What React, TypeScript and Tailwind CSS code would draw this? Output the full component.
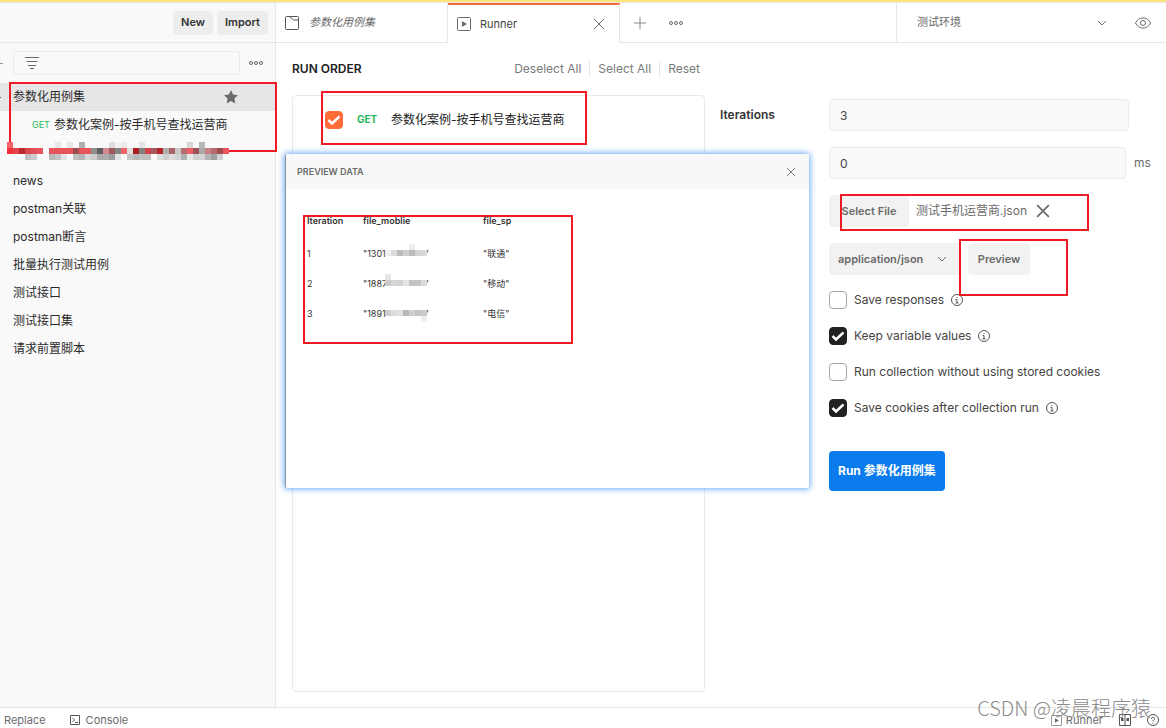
import { useState } from "react";
import type { ReactNode } from "react";
import clsx from "clsx";

const COLLECTIONS = [
  "news",
  "postman关联",
  "postman断言",
  "批量执行测试用例",
  "测试接口",
  "测试接口集",
  "请求前置脚本",
];

type Cell = [col: number, row: number, color: string];

const SIDEBAR_CELLS: Cell[] = [
  [0, 0, "#f5636b"], [8, 0, "#e6e6e6"], [10, 0, "#e6e6e6"], [12, 0, "#b0b0b0"],
  [17, 0, "#dedede"], [18, 0, "#f2f2f2"], [19, 0, "#eaeaea"], [22, 0, "#e4e4e4"],
  [30, 0, "#d6d6d6"], [32, 0, "#b8b8b8"],
  [0, 1, "#ef3239"], [1, 1, "#e5444c"], [2, 1, "#b92a30"], [3, 1, "#d9474f"],
  [4, 1, "#e0525a"], [5, 1, "#e9555e"], [7, 1, "#e9545c"], [8, 1, "#e9545c"],
  [9, 1, "#e9545c"], [10, 1, "#e9545c"], [11, 1, "#9b4d51"], [12, 1, "#e9545c"],
  [13, 1, "#e9545c"], [14, 1, "#8f8f8f"], [15, 1, "#5f5f5f"], [16, 1, "#d8898e"],
  [17, 1, "#9e5a5d"], [18, 1, "#858585"], [19, 1, "#f5636b"], [20, 1, "#dddddd"],
  [21, 1, "#a91f24"], [22, 1, "#808080"], [23, 1, "#d4434a"], [24, 1, "#a65a5e"],
  [25, 1, "#b6262c"], [26, 1, "#b0b0b0"], [27, 1, "#a9646a"], [28, 1, "#c8c8c8"],
  [29, 1, "#b56e72"], [30, 1, "#ee5e67"], [31, 1, "#9b5459"], [32, 1, "#aaaaaa"],
  [33, 1, "#c88084"], [34, 1, "#b86b6f"], [35, 1, "#a04a50"], [36, 1, "#f0545c"],
  [3, 2, "#c0c0c0"], [4, 2, "#cccccc"], [7, 2, "#b8b8b8"], [8, 2, "#c4c4c4"],
  [9, 2, "#e4e4e4"], [11, 2, "#c0c0c0"], [12, 2, "#b4b4b4"], [13, 2, "#d6d6d6"],
  [14, 2, "#cccccc"], [15, 2, "#a8a8a8"], [16, 2, "#aaaaaa"], [17, 2, "#9c9c9c"],
  [18, 2, "#e4e4e4"], [20, 2, "#c4c4c4"], [21, 2, "#b8b8b8"], [22, 2, "#c0c0c0"],
  [23, 2, "#c0c0c0"], [25, 2, "#dddddd"], [26, 2, "#d0d0d0"], [27, 2, "#dcdcdc"],
  [28, 2, "#d4d4d4"], [29, 2, "#b0b0b0"], [30, 2, "#e8e8e8"], [31, 2, "#d0d0d0"],
  [32, 2, "#d4d4d4"], [33, 2, "#b4b4b4"], [34, 2, "#a0a0a0"], [35, 2, "#d0d0d0"],
];

const PREVIEW_ROWS: { id: number; prefix: string; sp: string; cells: Cell[] }[] = [
  {
    id: 1,
    prefix: '"1301',
    sp: '"联通"',
    cells: [
      [4, 0, "#ededed"], [0, 1, "#efefef"], [1, 1, "#dcdcdc"], [2, 1, "#bdbdbd"],
      [3, 1, "#cfcfcf"], [4, 1, "#bcbcbc"], [5, 1, "#d4d4d4"], [6, 1, "#d9d9d9"],
    ],
  },
  {
    id: 2,
    prefix: '"1887',
    sp: '"移动"',
    cells: [
      [0, 0, "#e4e4e4"], [0, 1, "#cacaca"], [1, 1, "#d6d6d6"], [2, 1, "#d2d2d2"],
      [3, 1, "#e3e3e3"], [4, 1, "#c2c2c2"], [5, 1, "#c3c3c3"], [6, 1, "#dadada"],
    ],
  },
  {
    id: 3,
    prefix: '"1891',
    sp: '"电信"',
    cells: [
      [0, 1, "#cccccc"], [1, 1, "#dddddd"], [2, 1, "#e2e2e2"], [3, 1, "#b8b8b8"],
      [4, 1, "#cfcfcf"], [5, 1, "#c4c4c4"], [6, 1, "#cacaca"], [6, 2, "#efefef"],
    ],
  },
];

function Mosaic({ cells, cols, className }: { cells: Cell[]; cols: number; className?: string }) {
  return (
    <svg
      width={cols * 6}
      height={18}
      viewBox={`0 0 ${cols * 6} 18`}
      shapeRendering="crispEdges"
      className={className}
      aria-hidden="true"
    >
      {cells.map(([col, row, color]) => (
        <rect key={`${col}-${row}`} x={col * 6} y={row * 6} width={6} height={6} fill={color} />
      ))}
    </svg>
  );
}

function Highlight({ className }: { className: string }) {
  return <div className={clsx("pointer-events-none absolute border-2 border-[#ed1c24]", className)} />;
}

function DotsIcon() {
  return (
    <svg width="16" height="8" viewBox="0 0 16 8" fill="none" stroke="#6b6b6b">
      <circle cx="3" cy="4" r="1.5" />
      <circle cx="8" cy="4" r="1.5" />
      <circle cx="13" cy="4" r="1.5" />
    </svg>
  );
}

function CloseIcon({ size, width = 1 }: { size: number; width?: number }) {
  return (
    <svg width={size} height={size} viewBox="0 0 12 12" fill="none" stroke="#6b6b6b" strokeWidth={width}>
      <path d="M1 1l10 10M11 1L1 11" />
    </svg>
  );
}

function ChevronIcon() {
  return (
    <svg width="10" height="6" viewBox="0 0 10 6" fill="none" stroke="#6b6b6b">
      <path d="M1 1l4 4 4-4" />
    </svg>
  );
}

function InfoIcon() {
  return (
    <svg width="12" height="12" viewBox="0 0 12 12" fill="none" stroke="#555">
      <circle cx="6" cy="6" r="5.5" />
      <path d="M4.5 5.5H6V9M4.5 9h3M5.5 3.5h1" />
    </svg>
  );
}

function PlayBoxIcon({ size }: { size: number }) {
  return (
    <svg width={size} height={size} viewBox="0 0 14 14" fill="none" stroke="#6b6b6b">
      <rect x="0.5" y="0.5" width="13" height="13" rx="1" />
      <path d="M5 4l5 3-5 3z" fill="#6b6b6b" stroke="none" />
    </svg>
  );
}

function CheckBox({
  id,
  defaultChecked,
  orange,
}: {
  id: string;
  defaultChecked?: boolean;
  orange?: boolean;
}) {
  return (
    <span className="relative flex size-[18px] shrink-0">
      <input
        id={id}
        type="checkbox"
        defaultChecked={defaultChecked}
        className={clsx(
          "peer size-[18px] appearance-none rounded border border-[#a6a6a6] bg-white",
          orange
            ? "checked:border-[#ff6c37] checked:bg-[#ff6c37]"
            : "checked:border-[#212121] checked:bg-[#212121]",
        )}
      />
      <svg
        viewBox="0 0 18 18"
        fill="none"
        stroke="white"
        strokeWidth="2.5"
        className="pointer-events-none absolute inset-0 hidden peer-checked:block"
      >
        <path d="M3.5 9l3.5 3.5 7.500-7" />
      </svg>
    </span>
  );
}

function Option({
  id,
  checked,
  info,
  children,
}: {
  id: string;
  checked?: boolean;
  info?: boolean;
  children: ReactNode;
}) {
  return (
    <div className="flex h-[18px] items-center gap-[7px]">
      <CheckBox id={id} defaultChecked={checked} />
      <label htmlFor={id} className="leading-5 whitespace-nowrap text-[#444]">
        {children}
      </label>
      {info && <InfoIcon />}
    </div>
  );
}

function Sidebar() {
  return (
    <aside className="flex w-[276px] shrink-0 flex-col border-r border-[#e6e6e6] bg-[#f9f9f9]">
      <div className="flex h-10 items-center justify-end gap-1 border-b border-[#e6e6e6] pr-[7px] text-[11px] font-semibold text-[#333]">
        <button type="button" className="h-6 rounded bg-[#ededed] px-2">
          New
        </button>
        <button type="button" className="h-6 rounded bg-[#ededed] px-2">
          Import
        </button>
      </div>

      <div className="flex items-center py-2 pr-[11px]">
        <span className="mr-[10px] h-px w-[3px] bg-[#999]" />
        <div className="relative flex-1">
          <input
            aria-label="Filter collections"
            className="block h-6 w-full rounded-xs border border-[#ececec] bg-transparent pl-8 text-xs outline-none"
          />
          <svg
            width="14"
            height="12"
            viewBox="0 0 14 12"
            stroke="#6b6b6b"
            className="pointer-events-none absolute top-1.5 left-3"
          >
            <path d="M0 .5h14M1.500 4.500h11M3 8.500h8M5 11.500h4" />
          </svg>
        </div>
        <button type="button" aria-label="More" className="ml-2">
          <DotsIcon />
        </button>
      </div>

      <nav className="text-[#2b2b2b]">
        <div className="relative">
          <a href="#collection" className="flex h-7 items-center bg-[#e6e6e6] pr-[37px]">
            <span className="mr-3 size-px bg-[#555]" />
            <span className="flex-1">参数化用例集</span>
            <svg width="14" height="14" viewBox="0 0 14 14" fill="#6b6b6b">
              <path d="M7 0l2.100 4.600 4.900.6-3.600 3.400.9 5L7 11.100 2.700 13.600l.9-5L0 5.200l4.900-.6z" />
            </svg>
          </a>
          <a href="#request" className="flex h-7 items-center gap-1 pl-8">
            <span className="text-[9px] text-[#26b95a]">GET</span>
            <span>参数化案例-按手机号查找运营商</span>
          </a>
          <div className="h-7" />
          <Highlight className="-top-px -right-[2px] left-[9px] h-[70px]" />
          <Mosaic
            cells={SIDEBAR_CELLS}
            cols={37}
            className="absolute top-[59px] left-[7px] bg-[#f9f9f9]"
          />
        </div>
        {COLLECTIONS.map((name) => (
          <a key={name} href="#collection" className="flex h-7 items-center pl-[13px]">
            {name}
          </a>
        ))}
      </nav>
    </aside>
  );
}

function TabBar() {
  return (
    <header className="flex h-10 shrink-0 text-[11px] text-[#6b6b6b]">
      <button
        type="button"
        className="flex w-[172px] items-center gap-2.5 border-r border-b border-[#e6e6e6] pl-[9px] italic"
      >
        <svg width="14" height="14" viewBox="0 0 14 14" fill="none" stroke="#555">
          <path d="M4.500 .5H1.500a1 1 0 0 0-1 1v11a1 1 0 0 0 1 1h11a1 1 0 0 0 1-1v-11a1 1 0 0 0-1-1H4.500l4 3.500h5" />
        </svg>
        参数化用例集
      </button>
      <div className="flex w-[172px] items-center border-t-2 border-r border-t-[#f26b3a] border-r-[#e6e6e6] pr-3.5 pl-[9px]">
        <PlayBoxIcon size={14} />
        <span className="ml-[9px] flex-1 text-[#444]">Runner</span>
        <button type="button" aria-label="Close tab">
          <CloseIcon size={12} />
        </button>
      </div>
      <div className="flex flex-1 items-center gap-[22px] border-b border-[#e6e6e6] pl-3.5">
        <button type="button" aria-label="New tab">
          <svg width="12" height="12" viewBox="0 0 12 12" stroke="#888">
            <path d="M6 0v12M0 6h12" />
          </svg>
        </button>
        <button type="button" aria-label="Tab options">
          <DotsIcon />
        </button>
      </div>
      <div className="flex w-[270px] items-center border-b border-l border-[#e6e6e6] pr-[15px] pl-5">
        <button type="button" className="flex flex-1 items-center justify-between">
          测试环境
          <ChevronIcon />
        </button>
        <button type="button" aria-label="Environment quick look" className="ml-7">
          <svg width="16" height="12" viewBox="0 0 16 12" fill="none" stroke="#6b6b6b">
            <path d="M.5 6C2 3 4.500 .9 8 .9S14 3 15.500 6C14 9 11.500 11.100 8 11.100S2 9 .5 6z" />
            <circle cx="8" cy="6" r="2.500" />
          </svg>
        </button>
      </div>
    </header>
  );
}

function RunOrder() {
  return (
    <section className="flex flex-col pt-4 pb-[15px]">
      <div className="flex h-5 items-center">
        <h2 className="flex-1 font-semibold text-[#212121]">RUN ORDER</h2>
        <div className="flex items-center divide-x divide-[#e6e6e6] text-[#7a7a7a]">
          <button type="button" className="px-2">
            Deselect All
          </button>
          <button type="button" className="px-2">
            Select All
          </button>
          <button type="button" className="pr-[5px] pl-2">
            Reset
          </button>
        </div>
      </div>
      <div className="mt-4 flex-1 rounded border border-[#e9e9e9]">
        <div className="relative flex h-12 items-center pl-8">
          <CheckBox id="run-request" defaultChecked orange />
          <label htmlFor="run-request" className="flex items-center text-[#212121]">
            <span className="w-12 pl-3.5 text-[10px] font-bold text-[#26b95a]">GET</span>
            参数化案例-按手机号查找运营商
          </label>
          <Highlight className="-top-[5px] left-7 h-[54px] w-[266px]" />
        </div>
      </div>
    </section>
  );
}

function RunSettings() {
  return (
    <section className="grid grid-cols-[109px_minmax(0,1fr)] content-start pt-14 text-[#6b6b6b]">
      <label htmlFor="iterations" className="leading-8 font-semibold text-[#333]">
        Iterations
      </label>
      <div className="flex flex-col gap-4">
        <input
          id="iterations"
          defaultValue="3"
          className="h-8 w-[300px] rounded border border-[#ebebeb] bg-[#f9f9f9] px-2.5 text-[#444]"
        />
        <div className="flex h-8 items-center gap-2">
          <input
            aria-label="Delay"
            defaultValue="0"
            className="h-8 w-[297px] rounded border border-[#ebebeb] bg-[#f9f9f9] px-2.5 text-[#444]"
          />
          ms
        </div>
        <div className="relative flex h-8 items-center">
          <button type="button" className="h-8 w-20 rounded bg-[#f2f2f2] text-[11px] font-semibold">
            Select File
          </button>
          <span className="ml-[7px]">测试手机运营商.json</span>
          <button type="button" aria-label="Remove file" className="ml-[9px]">
            <CloseIcon size={14} width={1.5} />
          </button>
          <Highlight className="-top-px left-[11px] h-[37px] w-[249px]" />
        </div>
        <div className="relative flex gap-2 text-[11px] font-semibold">
          <div className="relative">
            <select
              aria-label="Data file type"
              className="h-8 w-[131px] appearance-none rounded bg-[#f2f2f2] pl-[9px]"
            >
              <option>application/json</option>
              <option>text/csv</option>
            </select>
            <span className="pointer-events-none absolute top-[13px] right-[13px]">
              <ChevronIcon />
            </span>
          </div>
          <button type="button" className="h-8 w-[62px] rounded bg-[#f2f2f2]">
            Preview
          </button>
          <Highlight className="-top-1 left-[130px] h-[57px] w-[109px]" />
        </div>
        <div className="flex flex-col gap-[18px]">
          <Option id="save-responses" info>
            Save responses
          </Option>
          <Option id="keep-values" checked info>
            Keep variable values
          </Option>
          <Option id="no-cookies">Run collection without using stored cookies</Option>
          <Option id="save-cookies" checked info>
            Save cookies after collection run
          </Option>
        </div>
        <button
          type="button"
          className="mt-[18px] h-10 self-start rounded bg-[#097bed] px-[9px] font-bold text-white"
        >
          Run 参数化用例集
        </button>
      </div>
    </section>
  );
}

function PreviewDialog({ onClose }: { onClose: () => void }) {
  return (
    <div
      role="dialog"
      aria-label="Preview data"
      className="absolute top-[111px] left-[9px] h-[334px] w-[524px] rounded-xs border-l border-[#8a8f98] bg-white text-[9px] text-[#333] shadow-[0_0_6px_1px_#6aaaf5]"
    >
      <div className="flex h-[35px] items-center justify-between bg-[#f8f8f8] pr-[13px] pl-[11px]">
        <h3 className="font-semibold text-[#6b6b6b]">PREVIEW DATA</h3>
        <button type="button" aria-label="Close" onClick={onClose}>
          <CloseIcon size={10} />
        </button>
      </div>
      <div className="relative mx-[17px] mt-[26px] h-[129px] w-[270px] pl-1">
        <table className="table-fixed text-left">
          <thead>
            <tr className="h-3 leading-3">
              <th className="w-14 font-semibold">Iteration</th>
              <th className="w-[120px] font-semibold">file_moblie</th>
              <th className="w-[90px] font-semibold">file_sp</th>
            </tr>
          </thead>
          <tbody className="before:block before:h-3">
            {PREVIEW_ROWS.map((row) => (
              <tr key={row.id} className="h-[30px]">
                <td>{row.id}</td>
                <td>
                  <span className="relative flex w-[66px] items-center justify-between">
                    <span>{row.prefix}</span>
                    <span>"</span>
                    <Mosaic cells={row.cells} cols={7} className="absolute -top-1 left-[22px]" />
                  </span>
                </td>
                <td>{row.sp}</td>
              </tr>
            ))}
          </tbody>
        </table>
        <Highlight className="inset-0" />
      </div>
    </div>
  );
}

function StatusBar() {
  return (
    <footer className="relative h-[21px] shrink-0 border-t border-[#e6e6e6] text-[11px] text-[#6b6b6b]">
      <div className="flex h-6 items-center pr-[7px] pl-1">
        <button type="button">Replace</button>
        <button type="button" className="ml-6 flex items-center gap-1.5">
          <svg width="10" height="10" viewBox="0 0 10 10" fill="none" stroke="#555">
            <path d="M.5 .5h9v9h-9zM2.500 3l2 2-2 2M5 7.500h3" />
          </svg>
          Console
        </button>
        <button type="button" className="ml-auto flex items-center gap-1">
          <PlayBoxIcon size={11} />
          Runner
        </button>
        <button type="button" aria-label="Two pane view" className="ml-4">
          <svg width="12" height="12" viewBox="0 0 12 12" fill="none" stroke="#555">
            <path d="M.5 .5h11v11H.5zM6 0v12" />
            <path d="M2 4h2.500v3H2zM7.500 4H10v3H7.500z" fill="#555" stroke="none" />
          </svg>
        </button>
        <button type="button" aria-label="Help" className="ml-4">
          <svg width="12" height="12" viewBox="0 0 12 12" fill="none" stroke="#555">
            <circle cx="6" cy="6" r="5.500" />
            <path d="M4.500 4.800c0-2.300 3.200-2 3 0C7.400 5.800 6 5.800 6 7.200M6 8.500v1" />
          </svg>
        </button>
      </div>
      <p className="pointer-events-none absolute right-[15px] -top-3 font-['Noto_Sans_CJK_SC',sans-serif] text-xl leading-6 font-light whitespace-nowrap text-[#8c8c8c]">
        CSDN @凌晨程序猿
      </p>
    </footer>
  );
}

export default function App() {
  const [previewOpen, setPreviewOpen] = useState(true);

  return (
    <div className="flex h-screen flex-col overflow-hidden border-t-2 border-[#ffe47e] bg-white font-['Inter','Noto_Sans_CJK_SC',sans-serif] text-xs">
      <div className="flex min-h-0 flex-1 border-t border-[#e6e6e6]">
        <Sidebar />
        <main className="flex min-w-0 flex-1 flex-col">
          <TabBar />
          <div className="relative grid flex-1 grid-cols-[minmax(0,1fr)_446px] gap-[15px] pl-4">
            <RunOrder />
            <RunSettings />
            {previewOpen && <PreviewDialog onClose={() => setPreviewOpen(false)} />}
          </div>
        </main>
      </div>
      <StatusBar />
    </div>
  );
}
